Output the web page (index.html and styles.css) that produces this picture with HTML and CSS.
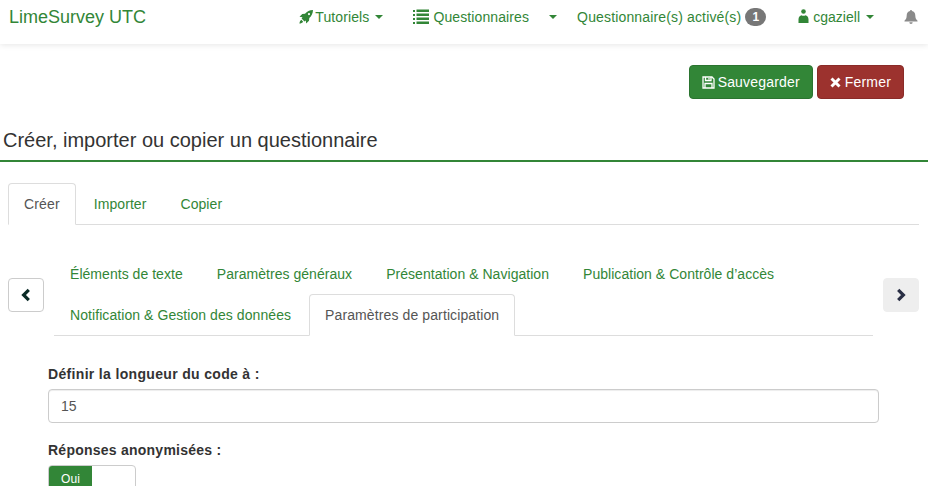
FILE: index.html
```html
<!DOCTYPE html>
<html lang="fr">
<head>
<meta charset="utf-8">
<title>LimeSurvey UTC</title>
<link rel="stylesheet" href="styles.css">
</head>
<body>
<nav class="navbar">
  <a class="brand">LimeSurvey UTC</a>
  <ul class="menu">
    <li class="m-tuto"><svg class="ico" width="14" height="14" viewBox="0 0 14 14"><path class="fill" d="M14 0c-3.500.2-6 1.400-8 3.700L3.300 4 .5 6.800l3 .4-.9 1.300 2.900 2.900 1.300-.9.400 3 2.800-2.800.3-2.700C12.600 6 13.800 3.500 14 0zM10 3a1.100 1.100 0 1 1 0 2.200A1.100 1.100 0 0 1 10 3zM2.300 9.800C1.200 10.500.6 12 .4 13.600c1.600-.2 3-.8 3.800-1.900z"/></svg><span>Tutoriels</span><i class="caret"></i></li>
    <li class="m-list"><svg class="ico" width="16" height="15" viewBox="0 0 16 15"><path class="fill" d="M0 1h2v2H0zM0 5h2v2H0zM0 9h2v2H0zM0 13h2v2H0zM3.500 .5h12.500v2.500H3.500zM3.500 4.500h12.500v2.500H3.500zM3.500 8.500h12.500v2.500H3.500zM3.500 12.500h12.500v2.500H3.500z"/></svg><span>Questionnaires</span></li>
    <li class="m-caret"><i class="caret"></i></li>
    <li class="m-active"><span>Questionnaire(s) activé(s)</span><b class="badge">1</b></li>
    <li class="m-user"><svg class="ico" width="11" height="14" viewBox="0 0 11 14"><circle class="fill" cx="5.500" cy="2.500" r="2.300"/><path class="fill" d="M.5 14v-3.500C.5 8 2 6.500 3.500 6.200c.6.400 1.200.6 2 .6s1.400-.2 2-.6c1.500.3 3 1.800 3 4.300V14z"/></svg><span class="username">cgaziell</span><i class="caret"></i></li>
    <li class="m-bell"><svg width="14" height="14" viewBox="0 0 14 15"><path class="bell" d="M7 0a1 1 0 0 1 1 1.200c2.300.4 3.600 2.200 3.600 4.600 0 3 1 4.400 2.400 5.700v.8H0v-.8c1.400-1.300 2.400-2.700 2.400-5.700 0-2.400 1.300-4.200 3.600-4.600A1 1 0 0 1 7 0zM5.200 13.100h3.600a1.800 1.800 0 0 1-3.600 0z"/></svg></li>
  </ul>
</nav>

<div class="toolbar">
  <a class="btn btn-save"><svg width="13" height="13" viewBox="0 0 13 13"><path class="floppy" d="M1 1h9l2 2v9H1zM3.500 1v3.500h5.500V1M3 12V7.500h7V12M7 2v1.500"/></svg>Sauvegarder</a>
  <a class="btn btn-close"><svg width="11" height="11" viewBox="0 0 11 11"><path class="cross" d="M1.500 1.500l8 8M9.500 1.500l-8 8"/></svg>Fermer</a>
</div>

<h1 class="title">Créer, importer ou copier un questionnaire</h1>

<ul class="tabs tabs-main">
  <li class="tab active">Créer</li>
  <li class="tab">Importer</li>
  <li class="tab">Copier</li>
</ul>

<div class="scroller">
  <button class="arrow arrow-prev" type="button"><svg width="10" height="14" viewBox="0 0 10 14"><path class="chev" d="M7.800 1.800L2.600 7l5.200 5.200"/></svg></button>
  <ul class="tabs tabs-sub">
    <li class="tab tab-tight">Éléments de texte</li>
    <li class="tab tab-tight">Paramètres généraux</li>
    <li class="tab tab-tight">Présentation &amp; Navigation</li>
    <li class="tab tab-tight">Publication &amp; Contrôle d’accès</li>
    <li class="tab">Notification &amp; Gestion des données</li>
    <li class="tab active">Paramètres de participation</li>
  </ul>
  <button class="arrow arrow-next" type="button"><svg width="10" height="14" viewBox="0 0 10 14"><path class="chev" d="M2.200 1.800L7.400 7l-5.200 5.200"/></svg></button>
</div>

<form class="form">
  <label class="label">Définir la longueur du code à :</label>
  <input class="input" type="text" value="15">
  <label class="label label-second">Réponses anonymisées :</label>
  <div class="switch"><span class="switch-on">Oui</span></div>
</form>
</body>
</html>
```

FILE: styles.css
```css
* { box-sizing: border-box; }
html, body { margin: 0; height: 486px; overflow: hidden; background: #fff; }
body { font: 14px/20px "Liberation Sans", Arial, sans-serif; color: #333; letter-spacing: .11px; }
ul { list-style: none; margin: 0; padding: 0; }

.navbar {
  height: 44px;
  display: flex;
  justify-content: space-between;
  background: #fff;
  box-shadow: 0 1px 6px rgba(0, 0, 0, .1);
  color: #328637;
  padding-left: 9px;
}
.brand { font-size: 18px; line-height: 34px; color: #328637; letter-spacing: 0; }
.menu { display: flex; height: 34px; line-height: 34px; }
.menu li { display: flex; align-items: center; white-space: nowrap; }
.ico { margin-right: 2px; }
.fill { fill: #328637; }
.bell { fill: #8a8a8a; }
.caret {
  display: block;
  width: 0; height: 0;
  margin-left: 6px;
  border-top: 4px solid #328637;
  border-left: 4px solid transparent;
  border-right: 4px solid transparent;
}
.m-tuto { margin-right: 30px; }
.m-list .ico { margin-right: 4px; margin-top: -2px; }
.m-caret { margin: 0 20px 0 14px; }
.m-active { margin-right: 32px; letter-spacing: .15px; }
.m-user .ico { margin-right: 4px; margin-top: -2px; }
.username { letter-spacing: 0; }
.m-bell { margin: 0 10px 0 30px; }
.badge {
  display: block;
  margin-left: 4px;
  min-width: 21px;
  height: 18px;
  border-radius: 10px;
  background: #777;
  color: #fff;
  font-size: 12px;
  line-height: 18px;
  text-align: center;
  letter-spacing: 0;
}

.toolbar { display: flex; justify-content: flex-end; gap: 4px; padding: 21px 24px 0 0; }
.btn {
  display: flex;
  align-items: center;
  gap: 4px;
  height: 34px;
  padding: 0 12px;
  border: 1px solid;
  border-radius: 4px;
  color: #fff;
}
.btn-save { background: #328637; border-color: #2b7430; gap: 3px; letter-spacing: .18px; }
.btn-close { background: #9c322e; border-color: #8a2b28; letter-spacing: .18px; }
.floppy { fill: none; stroke: #fff; stroke-width: 1.300; }
.cross { stroke: #fff; stroke-width: 3; fill: none; }

.title {
  margin: 0;
  height: 63px;
  padding: 30px 0 0 3px;
  font-size: 20px;
  font-weight: 400;
  line-height: 22px;
  color: #333;
  letter-spacing: 0;
  border-bottom: 2px solid #328637;
}

.tabs { display: flex; flex-wrap: wrap; }
.tab {
  height: 42px;
  margin: 0 2px -1px 0;
  padding: 10px 15px;
  border: 1px solid transparent;
  border-radius: 4px 4px 0 0;
  color: #328637;
  white-space: nowrap;
  letter-spacing: .07px;
}
.tab-tight { letter-spacing: .04px; }
.tab.active { color: #555; background: #fff; border-color: #ddd #ddd #fff; letter-spacing: .11px; }
.tabs-main { margin: 21px 9px 0 8px; border-bottom: 1px solid #ddd; height: 42px; }
.tabs-main .active { letter-spacing: .15px; }
.scroller { display: flex; align-items: flex-start; gap: 10px; margin: 28px 9px 0 8px; }
.tabs-sub { flex: 1; border-bottom: 1px solid #ddd; height: 83px; }
.arrow {
  width: 36px;
  height: 34px;
  margin-top: 25px;
  padding: 0;
  border: 1px solid #ccc;
  border-radius: 4px;
  background: #fff;
  display: flex;
  align-items: center;
  justify-content: center;
}
.arrow-next { background: #eee; border-color: #eee; }
.chev { fill: none; stroke-width: 3.200; stroke: #0b2b26; }
.arrow-next .chev { stroke: #2a2f45; }

.form { margin: 28px 49px 0 48px; }
.label { display: block; font-weight: 700; height: 20px; margin-bottom: 5px; letter-spacing: .33px; }
.input {
  display: block;
  width: 100%;
  height: 34px;
  padding: 6px 12px;
  border: 1px solid #ccc;
  border-radius: 4px;
  font: inherit;
  color: #555;
  box-shadow: inset 0 1px 1px rgba(0, 0, 0, .075);
}
.label-second { margin: 17px 0 5px; letter-spacing: .24px; }
.switch {
  width: 88px;
  height: 34px;
  border: 1px solid #ccc;
  border-radius: 4px;
  overflow: hidden;
}
.switch-on {
  display: block;
  width: 43px;
  height: 32px;
  background: #328637;
  color: #fff;
  font-size: 12px;
  line-height: 26px;
  text-align: center;
}
```
